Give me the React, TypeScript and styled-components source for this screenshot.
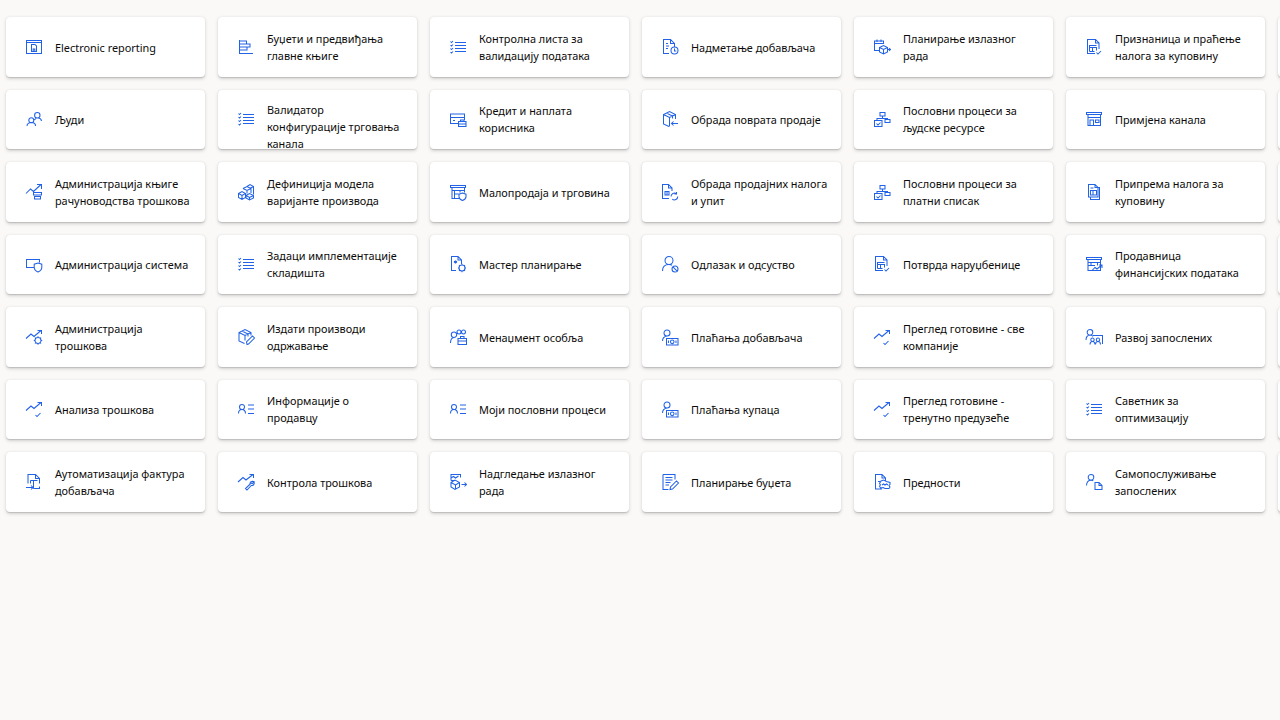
import React from "react";
import styled, { createGlobalStyle } from "styled-components";

const Global = createGlobalStyle`
  html, body { margin: 0; padding: 0; background: #faf9f8; }
  body { width: 1280px; height: 720px; overflow: hidden; font-family: "Noto Sans", "Open Sans", "Liberation Sans", sans-serif; }
`;
const Page = styled.main`
  width: 1280px; height: 720px; overflow: hidden; box-sizing: border-box;
  padding: 17px 0 0 6px; background: #faf9f8;
`;
const Grid = styled.div`
  display: grid;
  grid-template-columns: repeat(7, 199px);
  grid-auto-rows: 59.5px;
  gap: 13px;
`;
const Tile = styled.a`
  display: flex; align-items: center; gap: 12px;
  box-sizing: border-box; padding-left: 19px;
  background: #fff; border-radius: 4px; overflow: hidden;
  box-shadow: 0 1.6px 3.6px rgba(0,0,0,.16), 0 .3px .9px rgba(0,0,0,.12);
  cursor: pointer;
`;
const Label = styled.span<{ $lines: number }>`
  font-size: 10.9px; line-height: 17px; max-height: 34px; white-space: pre;
  font-weight: 450; color: #0c0b0a;
  margin-top: ${(p) => (p.$lines === 1 ? "1px" : p.$lines === 3 ? "-2px" : "0")};
`;
const Glyph = styled.svg`
  flex: none; width: 18px; height: 18px;
  fill: none; stroke: #2262e6; stroke-width: 1.05;
`;

const trend = <path d="M1 10.500L6 6l3 2.500L16 2.500M12.500 2.500h4V6" />;
const checklist = <path d="M6 4.500h11M6 7.500h11M6 10.500h11M6 13.500h11M1.500 3.500l1 1 1.500-1.500M1.500 7l1 1 1.500-1.500M1.500 10.500l1 1 1.500-1.500M1.500 14l1 1 1.500-1.500" />;
const store = <path d="M1.500 2.500h15v2h-15zM3 4.500V15.500h12.500V4.500" />;
const orgCheck = <path d="M7 2.500h5v3.500H7zM9.500 6v2.500H4V10M9.500 8.500H14.500V9.500M12 9.500h5v3h-5zM1.500 10.500h7.500v6H1.500zM3.500 13.500l1.500 1.500 2.500-2.500" />;
const receipt = <path d="M10 15.500H2.500V1.500h8l3.500 3.500v6M10.500 1.500V5H14M4.500 13.500V7.500H11.500M4.500 9.500h7v3M7.500 9.500v4M4.500 13.500h5M11.500 14.500l1.500 1.500 3-3" />;
const personMoney = <path d="M6 2a3 3 0 1 1 0 6 3 3 0 0 1 0-6zM1.500 13c0-2.500 1.500-4.500 4.500-5M5.500 10.500H17v6.500H5.500zM11.250 12a1.800 1.800 0 1 1 0 3.600 1.800 1.800 0 0 1 0-3.600zM7.500 12.500v2.500M15 12.500v2.500" />;
const personList = <path d="M5 4.500a2.500 2.500 0 1 1 0 5 2.500 2.500 0 0 1 0-5zM1.500 13.500c0-2.500 1.500-4 3.500-4s3.500 1.500 3.500 4M11 5h6M11 9h6M11 13.500h6" />;

const icons: Record<string, React.ReactNode> = {
  report: <path d="M1.500 2.500h15v13h-15zM1.500 4.500h15M6.500 13.500V6.500h3.500l1.500 1.500v5.500zM8.200 13.500v-2.500h1.600v2.500" />,
  ledger: <path d="M2.500 2v13.500H16M2.500 3h7v3h-7M9.500 6h3.500v3h-10.500M10 9v3h-7.500" />,
  checklist,
  docClock: <path d="M8 15.500H2.500V1.500h7l4 4v3M9.500 1.500v4h4M5 5.500h2M5 8h3M5 10.500h2M13.500 9a3.500 3.500 0 1 1 0 7 3.500 3.500 0 0 1 0-7zM13.500 10.500v2.500h1.800" />,
  calBox: <path d="M6.500 12.500H1.500V3h9v3M1.500 5.500h9M4 1.500v2.500M8 1.500v2.500M6.500 9.500l4-2 4 2v4.500l-4 2-4-2zM6.500 9.500l4 2 4-2M10.500 11.500v4.500M14 11.500h3.500M16 10l1.500 1.500-1.500 1.500" />,
  receipt,
  people: <path d="M12.300 2.500a2.700 2.700 0 1 1 0 5.400 2.700 2.700 0 0 1 0-5.400zM6.300 7.700a2.500 2.500 0 1 1 0 5 2.500 2.500 0 0 1 0-5zM2 16c0-2.200 2-3.500 4.300-3.500s4.300 1.300 4.300 3.500M11 8.500c-.5.2-1.200.8-1.500 1.500M13.500 8c1.800.3 2.800 1.300 3 3" />,
  cardBrief: <path d="M9 13.500H1.500v-9.500h14v6M1.500 7.500h14M4 10.500h2M9.500 11.500h7.500v5H9.500zM11.500 11.500V10h3.500v1.500M9.500 14h7.500" />,
  boxArrow: <path d="M8 16.500l-5.500-2.500V4.500l6-3 6 3v4.500M2.500 4.500l6 3 6-3M8.500 7.500v9M5.500 3l6 3v2.500M17 13.500h-6.500M12.500 11.500l-2 2 2 2" />,
  orgCheck,
  channel: <>{store}<path d="M3 7.500h12.500M5 15.500v-5.500h3.500v5.500M10.500 10h3.500v2.500h-3.500z" /></>,
  trendList: <path d="M1 10.500L5.500 6l3 2.500L16 1.500M12 1.500h4.500V6M8.500 9.500h8v2.500h-8zM9.500 13.500h6v2.500h-6z" />,
  cubes: <path d="M6 5.500l4-2 4 2v4.500M6 5.500l4 2 4-2M10 7.500v3M10 3.500l3-2 3.500 2v8M13 5.500l3.500-2M1.500 10.500L5 8.500l3.500 2v4L5 16.500l-3.500-2zM1.500 10.500l3.500 2 3.500-2M5 12.500v4M9 12.500l3.500-2 4 2v2.500l-4 2-3.500-2zM9 12.500l3.500 2 4-2M12.500 14.500v2.500" />,
  storeShield: <path d="M1.500 2.500h15v2h-15zM3 4.500V15.500h7.500M15.500 4.500v5M3 7.500h12.500M5.500 7.500V15M11 7.500v2M5.500 11h4M13.500 10l3.500 1.200v2.500c0 1.800-1.500 3-3.500 3.800-2-.8-3.500-2-3.500-3.800v-2.500z" />,
  docCycle: <path d="M8 15.500H1.500V1.500h6l3.500 3.500v3M7.500 1.500V5H11M4 8.500h4v3.500H4zM6 8.500V12M10 13.500a3.500 3.500 0 0 1 5.500-2.800M16.800 13.500a3.500 3.500 0 0 1-5.500 2.800M15.500 9v2h-2" />,
  docStack: <path d="M3.500 14V1.500H10l3 3v9.500zM10 1.500v3h3M13 4.500h1.500v12H5.500V14M5.500 7.500h6v4.500h-6zM8 7.500v4.500M5.500 5h3" />,
  monitorShield: <path d="M9 12.500H1.500V4.500h13v3M13 8l3.800 1.200v3c0 2.200-1.500 3.800-3.800 4.800-2.300-1-3.800-2.600-3.800-4.800v-3z" />,
  docGear: <path d="M7 15.500H2.500V1.500h6.500l3.500 3.500v4M9 1.500V5h3.500M6.500 5.500v3M5 6.200l3 1.600M8 6.200l-3 1.600M13 10a3 3 0 1 1 0 6 3 3 0 0 1 0-6zM13 8.800v1.200M13 16v1.200M10 13h-1M17 13h-1M10.800 10.800l-.8-.8M15.200 15.200l.8.800M15.200 10.800l.8-.8M10.800 15.200l-.8.800" />,
  personBlock: <path d="M8 1.500a4 4 0 1 1 0 8 4 4 0 0 1 0-8zM1.500 16c0-4 2.500-6.500 6.500-6.500 1.300 0 2.300.3 3 .8M14 11a3 3 0 1 1 0 6 3 3 0 0 1 0-6zM11.900 11.900l4.200 4.200" />,
  storeTrend: <>{store}<path d="M3 7.500h12.500M6 7.500v3M12.500 7.500v3M3 10.500h7M7 15.500l3-3 2 1.500 5-4M14 10h3v3" /></>,
  trendGear: <>{trend}<path d="M13 9.500a3 3 0 1 1 0 6 3 3 0 0 1 0-6zM13 8.300v1.200M13 15.500v1.200M10 12.500H8.800M17.200 12.500H16M10.800 10.300l-.8-.8M15.200 14.700l.8.800M15.200 10.300l.8-.8M10.800 14.700l-.8.800" /></>,
  boxPencil: <path d="M7.500 15.500L2 13V4.500l6-3 6 3v3M2 4.500l6 3 6-3M8 7.500v5M5 3l6 3v2.500M10 16.500l-.5-2.500 6-6 2 2-6 6z" />,
  peopleBrief: <path d="M5 4a2.700 2.700 0 1 1 0 5.400A2.700 2.700 0 0 1 5 4zM1.500 15c0-3 1.500-5.500 4-5.500M10 2a2 2 0 1 1 0 4 2 2 0 0 1 0-4zM14.500 2a2 2 0 1 1 0 4 2 2 0 0 1 0-4zM9 10.500h8.500v6H9zM11.500 10.500V8.500h3.500v2M9 13h8.500" />,
  personMoney,
  trendCheck: <>{trend}<path d="M10.500 15l1.500 1.500 3.500-3.500" /></>,
  personBoard: <path d="M5 1.500a2.800 2.800 0 1 1 0 5.600 2.800 2.800 0 0 1 0-5.600zM1 12c0-3 1.500-5 4-5 1.200 0 2.200.5 3 1.300M8 7.500h9.500v8.500M5 16.500c0-2 1-3 2.500-3s2.500 1 2.500 3M7.500 10a1.700 1.700 0 1 1 0 3.400 1.700 1.700 0 0 1 0-3.400zM10.500 16.500c0-2 1-3 2.500-3s2.500 1 2.500 3M13 10a1.700 1.700 0 1 1 0 3.400A1.700 1.700 0 0 1 13 10z" />,
  personList,
  docIn: <path d="M14.500 13.500v2h-6M3 10.500v-9h7.500l4 4v5M10.500 1.500v4h4M5.500 7.500h7M8.500 7.500v8M5.500 7.500v3M1 14.500h7M6 12.500l2 2-2 2" />,
  trendWrench: <path d="M1 9L6 4.500l3 2.500 7-5.500M12.500 1.500h4V5M16.500 8.500a2.500 2.500 0 0 0-3.500 2.700L8.500 15.500l1.500 1.500 4.300-4.500a2.500 2.500 0 0 0 2.700-3.500l-1.500 1.500-1.500-.3-.3-1.200z" />,
  chartBox: <path d="M2 7.500V1.500h9.500v3M2 7.500h4M2 5l2.500-1.500 2 1.500 3-2M2 9.500l4-2.500 4.500 2.500V14L6 16.500l-4-2.500zM2 9.500l4.500 2.500 4-2.500M6.500 12v4.500M12.500 11.500h5M15.500 9.500l2 2-2 2" />,
  listPencil: <path d="M2 1.500h12v5M2 1.500v15h5.500M4.500 4.500h7M4.500 7h7M4.500 9.500h5M4.500 12h3.500M9 16.500l.5-2.500 6-6 2 2-6 6z" />,
  docWave: <path d="M9 16H2.500V1.500H9l3.500 3.500v3.500M9 1.500V5h3.500M5 8.500h2M8 8l2.500-1 3 1.500 3.500 1v2l-1 1 1 1.500-1 1.500H12l-2-1-2.500.5-1-2 1-1-1-1.500zM9 12l1.500-1 1.500 1 1.500-1 1.500 1" />,
  personDoc: <path d="M6 1.500a2.800 2.800 0 1 1 0 5.600 2.800 2.800 0 0 1 0-5.600zM1.500 12.500c0-3 1.800-5.400 4.500-5.400 1 0 1.700.3 2.300.7M10 16.500V9.500h4l3 3v4zM14 9.500v3h3" />,
};

const tiles: [string, string][] = [
  ["report", "Electronic reporting"],
  ["ledger", "Буџети и предвиђања\nглавне књиге"],
  ["checklist", "Контролна листа за\nвалидацију података"],
  ["docClock", "Надметање добављача"],
  ["calBox", "Планирање излазног\nрада"],
  ["receipt", "Признаница и праћење\nналога за куповину"],
  ["", ""],
  ["people", "Људи"],
  ["checklist", "Валидатор\nконфигурације трговања\nканала"],
  ["cardBrief", "Кредит и наплата\nкорисника"],
  ["boxArrow", "Обрада поврата продаје"],
  ["orgCheck", "Пословни процеси за\nљудске ресурсе"],
  ["channel", "Примјена канала"],
  ["", ""],
  ["trendList", "Администрација књиге\nрачуноводства трошкова"],
  ["cubes", "Дефиниција модела\nваријанте производа"],
  ["storeShield", "Малопродаја и трговина"],
  ["docCycle", "Обрада продајних налога\nи упит"],
  ["orgCheck", "Пословни процеси за\nплатни списак"],
  ["docStack", "Припрема налога за\nкуповину"],
  ["", ""],
  ["monitorShield", "Администрација система"],
  ["checklist", "Задаци имплементације\nскладишта"],
  ["docGear", "Мастер планирање"],
  ["personBlock", "Одлазак и одсуство"],
  ["receipt", "Потврда наруџбенице"],
  ["storeTrend", "Продавница\nфинансијских података"],
  ["", ""],
  ["trendGear", "Администрација\nтрошкова"],
  ["boxPencil", "Издати производи\nодржавање"],
  ["peopleBrief", "Менаџмент особља"],
  ["personMoney", "Плаћања добављача"],
  ["trendCheck", "Преглед готовине - све\nкомпаније"],
  ["personBoard", "Развој запослених"],
  ["", ""],
  ["trendCheck", "Анализа трошкова"],
  ["personList", "Информације о\nпродавцу"],
  ["personList", "Моји пословни процеси"],
  ["personMoney", "Плаћања купаца"],
  ["trendCheck", "Преглед готовине -\nтренутно предузеће"],
  ["checklist", "Саветник за\nоптимизацију"],
  ["", ""],
  ["docIn", "Аутоматизација фактура\nдобављача"],
  ["trendWrench", "Контрола трошкова"],
  ["chartBox", "Надгледање излазног\nрада"],
  ["listPencil", "Планирање буџета"],
  ["docWave", "Предности"],
  ["personDoc", "Самопослуживање\nзапослених"],
  ["", ""],
];

export default function App() {
  return (
    <Page>
      <Global />
      <Grid>
        {tiles.map(([icon, label], i) => (
          <Tile key={i}>
            {icon && <Glyph viewBox="0 0 18 18">{icons[icon]}</Glyph>}
            {label && <Label $lines={label.split("\n").length}>{label}</Label>}
          </Tile>
        ))}
      </Grid>
    </Page>
  );
}
